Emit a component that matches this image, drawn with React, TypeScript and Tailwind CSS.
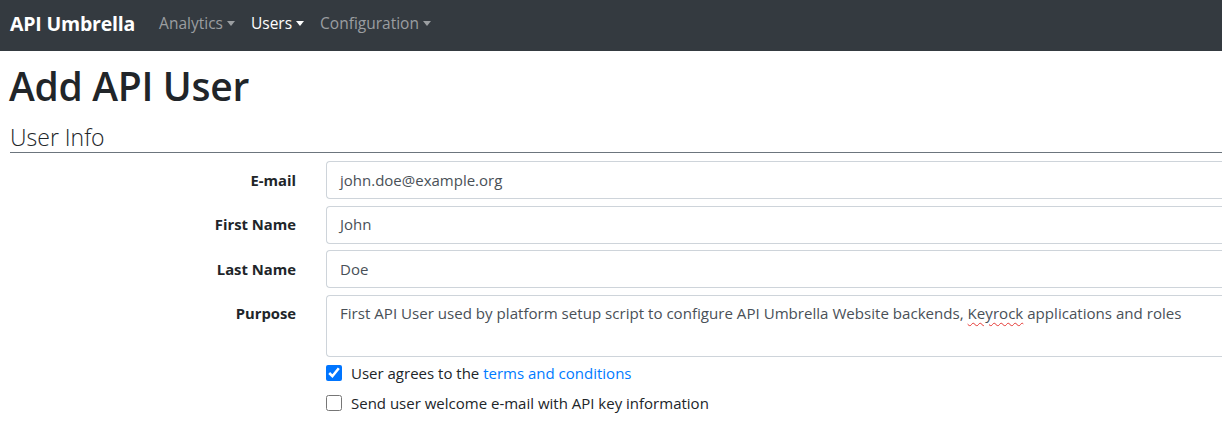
import React from 'react';

const font = { fontFamily: '"Open Sans", "Noto Sans", sans-serif' };

const Caret = () => (
  <span className="inline-block ml-[4px] align-middle w-0 h-0 border-t-[5px] border-t-current border-x-[4.5px] border-x-transparent relative top-[-1px]"></span>
);

const NavItem = ({ label, active = false }: { label: string; active?: boolean }) => (
  <a className={`flex items-center px-[8px] text-[15.5px] ${active ? 'text-white' : 'text-[#9b9ea1]'}`}>
    {label}
    <Caret />
  </a>
);

const Row = ({ label, value }: { label: string; value: string }) => (
  <div className="flex items-center">
    <label className="w-[286px] text-right font-bold text-[14.8px] text-[#212529]">{label}</label>
    <div className="ml-[30px] flex-1 h-[38px] border border-[#ced4da] border-r-0 rounded-l-[4px] flex items-center px-[13px] text-[15px] text-[#495057]">
      {value}
    </div>
  </div>
);

export default function App() {
  return (
    <div className="w-[1222px] h-[446px] overflow-hidden bg-white text-[#212529]" style={font}>
      {/* Navbar */}
      <nav className="h-[51px] bg-[#343a40] flex items-center pl-[10px] pb-[3px]">
        <span className="text-white font-bold text-[19.5px] mr-[16px] tracking-[-0.2px]">API Umbrella</span>
        <div className="flex items-center">
          <NavItem label="Analytics" />
          <NavItem label="Users" active />
          <NavItem label="Configuration" />
        </div>
      </nav>

      <div className="pl-[10px]">
        <h1 className="text-[39px] font-semibold leading-[46px] mt-[12px] ml-[-1px] tracking-[-0.3px]">Add API User</h1>

        <div className="mt-[13px] border-b border-[#6c757d]">
          <h2 className="text-[23px] font-light leading-[30px]">User Info</h2>
        </div>

        <div className="mt-[8px] flex flex-col gap-[6.5px]">
          <Row label="E-mail" value="john.doe@example.org" />
          <Row label="First Name" value="John" />
          <Row label="Last Name" value="Doe" />
          <div className="flex items-start">
            <label className="w-[286px] text-right font-bold text-[14.8px] pt-[7px]">Purpose</label>
            <div className="ml-[30px] flex-1 h-[62px] border border-[#ced4da] border-r-0 rounded-l-[4px] px-[13px] pt-[6px] text-[15.1px] text-[#495057]">
              First API User used by platform setup script to configure API Umbrella Website backends,{' '}
              <span className="underline decoration-wavy decoration-[#e53935] decoration-1 underline-offset-[3px]">Keyrock</span>{' '}
              applications and roles
            </div>
          </div>
        </div>

        <div className="ml-[316px] mt-[5px] flex flex-col gap-[8px]">
          <label className="flex items-center gap-[9px] text-[15px]">
            <input type="checkbox" defaultChecked className="w-[16px] h-[16px] m-0 accent-[#0075ff]" />
            <span>
              User agrees to the <a className="text-[#007bff]">terms and conditions</a>
            </span>
          </label>
          <label className="flex items-center gap-[9px] text-[15px]">
            <input type="checkbox" className="w-[16px] h-[16px] m-0 accent-[#0075ff]" />
            <span>Send user welcome e-mail with API key information</span>
          </label>
        </div>
      </div>
    </div>
  );
}
